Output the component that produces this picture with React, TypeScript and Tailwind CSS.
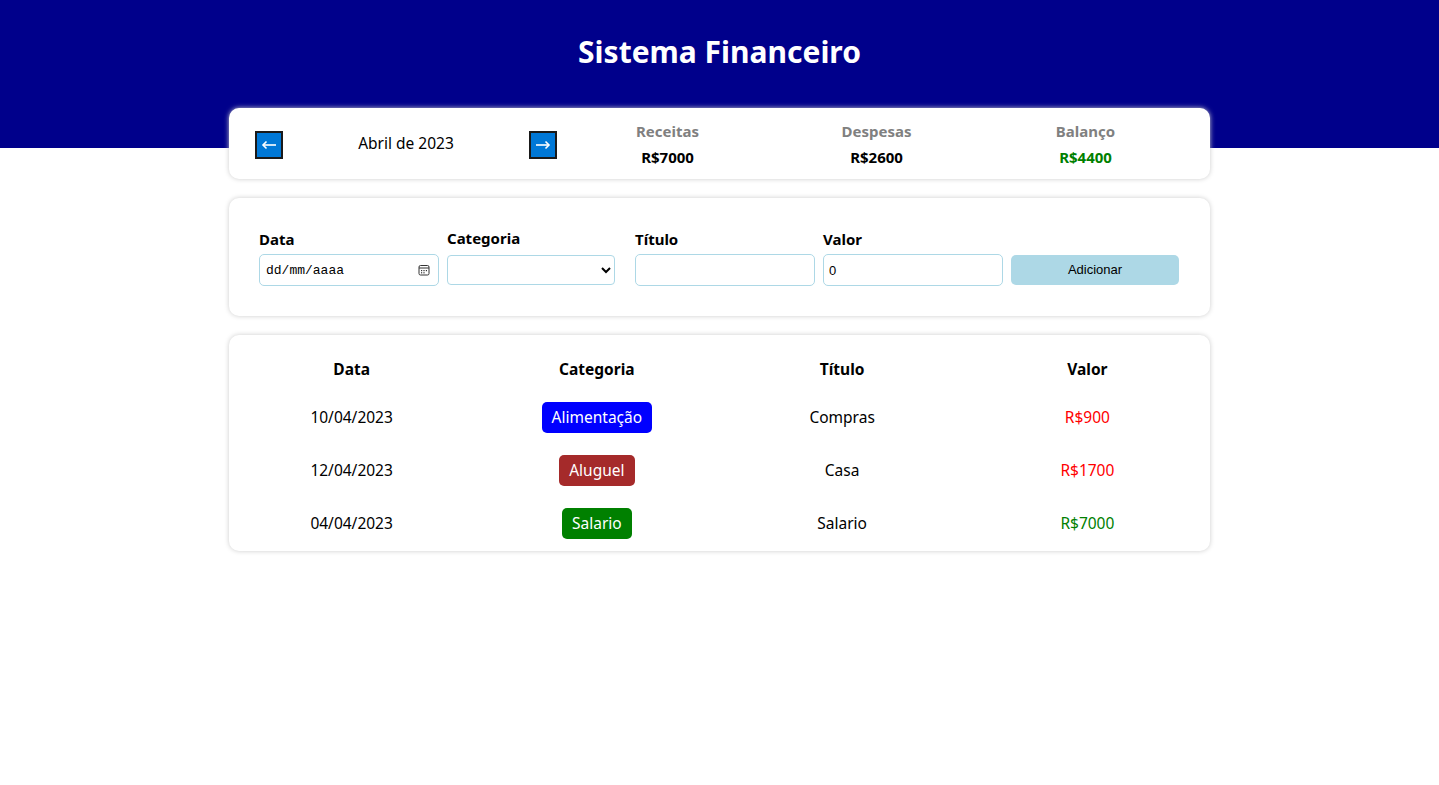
import { useState } from 'react';

type Item = {
  date: string;
  category: 'food' | 'rent' | 'salary';
  title: string;
  value: number;
};

const categories = {
  food: { title: 'Alimentação', color: 'bg-[#0000ff]', expense: true },
  rent: { title: 'Aluguel', color: 'bg-[#a52a2a]', expense: true },
  salary: { title: 'Salario', color: 'bg-[#008000]', expense: false },
};

const items: Item[] = [
  { date: '10/04/2023', category: 'food', title: 'Compras', value: 900 },
  { date: '12/04/2023', category: 'rent', title: 'Casa', value: 1700 },
  { date: '04/04/2023', category: 'salary', title: 'Salario', value: 7000 },
];

function ResumeItem({ title, value, color }: { title: string; value: number; color?: string }) {
  return (
    <div className="flex-1 flex flex-col items-center gap-[2px] text-[15px] leading-6 font-bold">
      <div className="text-[#808080]">{title}</div>
      <div className={color ?? 'text-black'}>R${value}</div>
    </div>
  );
}

function Arrow({ dir }: { dir: 'left' | 'right' }) {
  return (
    <svg width="16" height="10" viewBox="0 0 16 10" fill="none" stroke="white" strokeWidth="1.6">
      {dir === 'left' ? (
        <>
          <line x1="2" y1="5" x2="15" y2="5" />
          <polyline points="5.5,1.5 2,5 5.5,8.5" />
        </>
      ) : (
        <>
          <line x1="1" y1="5" x2="14" y2="5" />
          <polyline points="10.5,1.5 14,5 10.5,8.5" />
        </>
      )}
    </svg>
  );
}

function CalendarIcon() {
  return (
    <svg width="12" height="12" viewBox="0 0 12 12" fill="none" stroke="#333" strokeWidth="1">
      <rect x="1" y="1.5" width="10" height="9.5" rx="1.5" />
      <line x1="1" y1="4" x2="11" y2="4" />
      <rect x="3" y="6" width="1.2" height="1.2" fill="#333" stroke="none" />
      <rect x="5.4" y="6" width="1.2" height="1.2" fill="#333" stroke="none" />
      <rect x="7.8" y="6" width="1.2" height="1.2" fill="#333" stroke="none" />
      <rect x="3" y="8.2" width="1.2" height="1.2" fill="#333" stroke="none" />
      <rect x="5.4" y="8.2" width="1.2" height="1.2" fill="#333" stroke="none" />
    </svg>
  );
}

export default function App() {
  const [valor, setValor] = useState('0');

  const income = items.filter((i) => !categories[i.category].expense).reduce((s, i) => s + i.value, 0);
  const expense = items.filter((i) => categories[i.category].expense).reduce((s, i) => s + i.value, 0);
  const balance = income - expense;

  return (
    <div className="min-h-screen bg-white text-black font-['Noto_Sans','Open_Sans',sans-serif]">
      <header className="h-[148px] bg-[#00008b] pt-[29px]">
        <h1 className="text-center text-[30px] leading-[46px] font-bold text-white">Sistema Financeiro</h1>
      </header>

      <main className="w-[981px] mx-auto -mt-[40px] pb-10 flex flex-col">
        {/* month navigation + totals */}
        <section className="bg-white rounded-[10px] shadow-[0_0_5px_#ccc] pt-[11px] pb-[10px] pl-[26px] pr-[20px] mb-[19px] flex items-center">
          <div className="w-[302px] flex items-center justify-between">
            <button className="w-[28px] h-[28px] mt-[2px] bg-[#0078d7] border-2 border-[#1a1a1a] flex items-center justify-center">
              <Arrow dir="left" />
            </button>
            <div className="text-[15.5px]">Abril de 2023</div>
            <button className="w-[28px] h-[28px] mt-[2px] bg-[#0078d7] border-2 border-[#1a1a1a] flex items-center justify-center">
              <Arrow dir="right" />
            </button>
          </div>
          <div className="flex-1 ml-[6px] flex">
            <ResumeItem title="Receitas" value={income} />
            <ResumeItem title="Despesas" value={expense} />
            <ResumeItem title="Balanço" value={balance} color={balance < 0 ? 'text-[#ff0000]' : 'text-[#008000]'} />
          </div>
        </section>

        {/* new entry form */}
        <section className="bg-white rounded-[10px] shadow-[0_0_5px_#ccc] px-[30px] pt-[29px] pb-[30px] mb-[19px] flex items-end">
          <label className="w-[188px] flex flex-col">
            <span className="text-[15px] font-bold leading-[22px] mb-[4px]">Data</span>
            <div className="relative w-[180px]">
              <input
                type="text"
                placeholder="dd/mm/aaaa"
                className="w-[180px] h-[32px] border border-[#add8e6] rounded-[5px] px-[6px] text-[13px] font-['Liberation_Mono',monospace] placeholder:text-black outline-none"
              />
              <span className="absolute right-[9px] top-[10px]">
                <CalendarIcon />
              </span>
            </div>
          </label>
          <label className="w-[188px] flex flex-col">
            <span className="text-[15px] font-bold leading-[22px] mb-[6px]">Categoria</span>
            <select className="w-[168px] h-[30px] mb-[1px] border border-[#add8e6] rounded-[4px] bg-white text-[13px] outline-none">
              <option value=""></option>
              <option value="food">Alimentação</option>
              <option value="rent">Aluguel</option>
              <option value="salary">Salario</option>
            </select>
          </label>
          <label className="w-[188px] flex flex-col">
            <span className="text-[15px] font-bold leading-[22px] mb-[4px]">Título</span>
            <input
              type="text"
              className="w-[180px] h-[32px] border border-[#add8e6] rounded-[5px] px-[6px] text-[13px] outline-none"
            />
          </label>
          <label className="w-[188px] flex flex-col">
            <span className="text-[15px] font-bold leading-[22px] mb-[4px]">Valor</span>
            <input
              type="number"
              value={valor}
              onChange={(e) => setValor(e.target.value)}
              className="w-[180px] h-[32px] border border-[#add8e6] rounded-[5px] px-[5px] text-[13px] font-['Liberation_Sans',Arial,sans-serif] outline-none"
            />
          </label>
          <button className="w-[168px] h-[30px] mb-[1px] bg-[#add8e6] rounded-[5px] text-[13px] font-['Liberation_Sans',Arial,sans-serif]">
            Adicionar
          </button>
        </section>

        {/* entries table */}
        <section className="bg-white rounded-[10px] shadow-[0_0_5px_#ccc] pt-[13px] pb-[1px]">
          <table className="w-full table-fixed text-[15.5px]">
            <thead>
              <tr className="h-[43px]">
                <th className="font-bold">Data</th>
                <th className="font-bold">Categoria</th>
                <th className="font-bold">Título</th>
                <th className="font-bold">Valor</th>
              </tr>
            </thead>
            <tbody>
              {items.map((item) => {
                const cat = categories[item.category];
                return (
                  <tr key={item.date + item.title} className="h-[53px] text-center">
                    <td>{item.date}</td>
                    <td>
                      <span className={`inline-block ${cat.color} text-white rounded-[5px] px-[10px] leading-[31px]`}>
                        {cat.title}
                      </span>
                    </td>
                    <td>{item.title}</td>
                    <td className={cat.expense ? 'text-[#ff0000]' : 'text-[#008000]'}>R${item.value}</td>
                  </tr>
                );
              })}
            </tbody>
          </table>
        </section>
      </main>
    </div>
  );
}
